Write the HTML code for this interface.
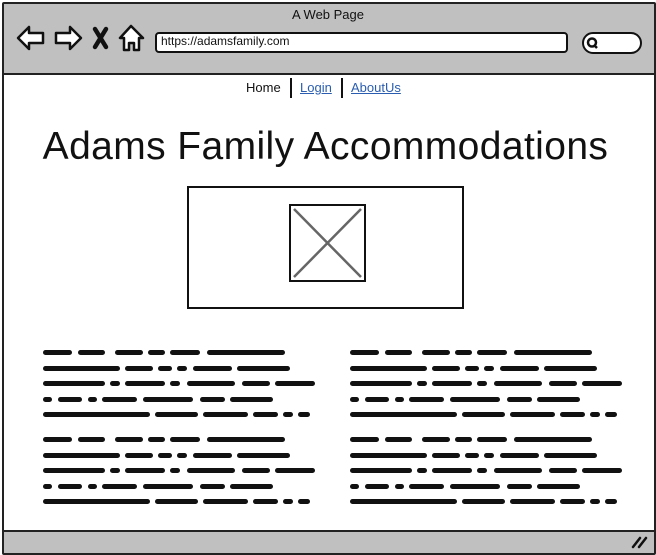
<!DOCTYPE html>
<html><head><meta charset="utf-8"><style>
body{margin:0;width:656px;height:555px;overflow:hidden;background:#fff;font-family:"Liberation Sans",sans-serif;position:relative}
.a{position:absolute}
.bar{position:absolute;height:5px;background:#111;border-radius:3px}
</style></head><body>
<div class="a" style="left:2px;top:2px;width:650px;height:549px;border:2px solid #222;border-radius:2px"></div>
<div class="a" style="left:4px;top:4px;width:650px;height:69px;background:#c0c0c0;border-bottom:2px solid #222"></div>
<div class="a" style="left:4px;top:530px;width:650px;height:21px;background:#c0c0c0;border-top:2px solid #222"></div>
<div class="a" style="left:0;width:656px;top:7px;text-align:center;font-size:13px;color:#111">A Web Page</div>
<svg class="a" style="left:14px;top:22px" width="135" height="32" viewBox="0 0 135 32" fill="#fff" stroke="#111" stroke-width="2.5" stroke-linejoin="round">
<path d="M4 16 L15 5 L15 11 L29 11 L29 21 L15 21 L15 27 Z"/>
<path d="M67 16 L56 5 L56 11 L42 11 L42 21 L56 21 L56 27 Z"/>
<path d="M81 7 L92 25 M92 7 L81 25" stroke-width="4.5" stroke-linecap="round"/>
<path d="M117 4 L106 16 L110 16 L110 28 L115 28 L115 21 L120 21 L120 28 L125 28 L125 16 L129 16 Z"/>
</svg>
<div class="a" style="left:155px;top:32px;width:409px;height:17px;background:#fff;border:2px solid #111;border-radius:4px"></div>
<div class="a" style="left:161px;top:34px;font-size:12px;color:#111">https://adamsfamily.com</div>
<div class="a" style="left:582px;top:32px;width:56px;height:18px;background:#fff;border:2px solid #111;border-radius:11px"></div>
<svg class="a" style="left:585px;top:35px" width="16" height="16"><circle cx="7" cy="7.5" r="4" fill="none" stroke="#111" stroke-width="2.5"/><line x1="9" y1="10" x2="12" y2="13" stroke="#111" stroke-width="2.5"/></svg>
<div class="a" style="left:246px;top:80px;font-size:13px;color:#111">Home</div>
<div class="a" style="left:290px;top:78px;width:2px;height:20px;background:#111"></div>
<div class="a" style="left:300px;top:80px;font-size:13px;color:#2a5db0;text-decoration:underline">Login</div>
<div class="a" style="left:341px;top:78px;width:2px;height:20px;background:#111"></div>
<div class="a" style="left:351px;top:80px;font-size:13px;color:#2a5db0;text-decoration:underline">AboutUs</div>
<div class="a" style="left:0;width:651px;top:125px;text-align:center;font-size:39px;color:#111;letter-spacing:0.4px">Adams Family Accommodations</div>
<div class="a" style="left:187px;top:186px;width:273px;height:119px;border:2px solid #111"></div>
<div class="a" style="left:289px;top:204px;width:73px;height:74px;border:2px solid #111"></div>
<svg class="a" style="left:291px;top:206px" width="73" height="74"><path d="M3 3 L70 71 M70 3 L3 71" stroke="#666" stroke-width="2.5"/></svg>
<svg class="a" style="left:630px;top:534px" width="20" height="16"><path d="M3 13 L10 4 M9 13 L16 4" stroke="#111" stroke-width="2.5" stroke-linecap="round"/></svg>
<div id="t"></div>
<script>
var L=[[[40,125],[145,225],[255,340],[355,405],[420,510],[530,765]],
[[40,270],[285,370],[385,425],[440,470],[490,605],[620,780]],
[[40,225],[240,270],[285,405],[420,450],[470,615],[635,720],[735,855]],
[[40,65],[85,155],[175,200],[215,320],[340,490],[510,585],[600,730]],
[[40,360],[375,505],[520,655],[670,745],[760,790],[805,840]]];
var h='';[350,437].forEach(function(y0){[30,337].forEach(function(x0){L.forEach(function(l,i){l.forEach(function(w){h+='<div class="bar" style="left:'+(x0+w[0]/3)+'px;top:'+(y0+i*15.6)+'px;width:'+((w[1]-w[0])/3)+'px"></div>';});});});});
document.getElementById('t').innerHTML=h;
</script>
</body></html>
